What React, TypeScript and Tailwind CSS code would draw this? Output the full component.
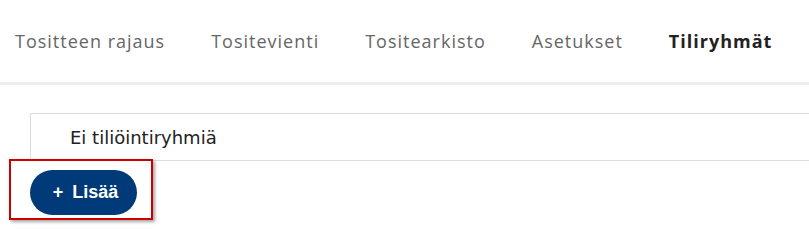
import React from "react";

const tabs = ["Tositteen rajaus", "Tositevienti", "Tositearkisto", "Asetukset", "Tiliryhmät"];

export default function App() {
  const active = "Tiliryhmät";

  return (
    <div className="relative w-[809px] h-[251px] bg-white overflow-hidden">
      <nav className="h-[82px] flex items-center pl-[15px] gap-[46px] font-['Open_Sans',sans-serif] text-[18px] tracking-[1px]">
        {tabs.map((t) => (
          <span
            key={t}
            className={t === active ? "font-bold text-[#222]" : "text-[#666]"}
          >
            {t}
          </span>
        ))}
      </nav>
      <div className="h-[3px] bg-[#eeeeee]" />

      <div className="pt-[28px] pl-[30px]">
        <div className="h-[48px] border-y border-l border-[#dddddd] flex items-center pl-[39px] font-['DejaVu_Sans',sans-serif] text-[18px] text-[#222]">
          Ei tiliöintiryhmiä
        </div>
        <button className="mt-[9px] w-[107px] h-[45px] rounded-full bg-[#003a78] text-white font-bold text-[18px] font-['Liberation_Sans',sans-serif] flex items-center justify-center gap-[9px] pl-[4px]">
          <span>+</span>
          <span>Lisää</span>
        </button>
      </div>

      <div className="absolute left-[9px] top-[159px] w-[144px] h-[61px] border-2 border-[#cc0000] shadow-[2px_2px_3px_rgba(0,0,0,0.35)]" />
    </div>
  );
}
